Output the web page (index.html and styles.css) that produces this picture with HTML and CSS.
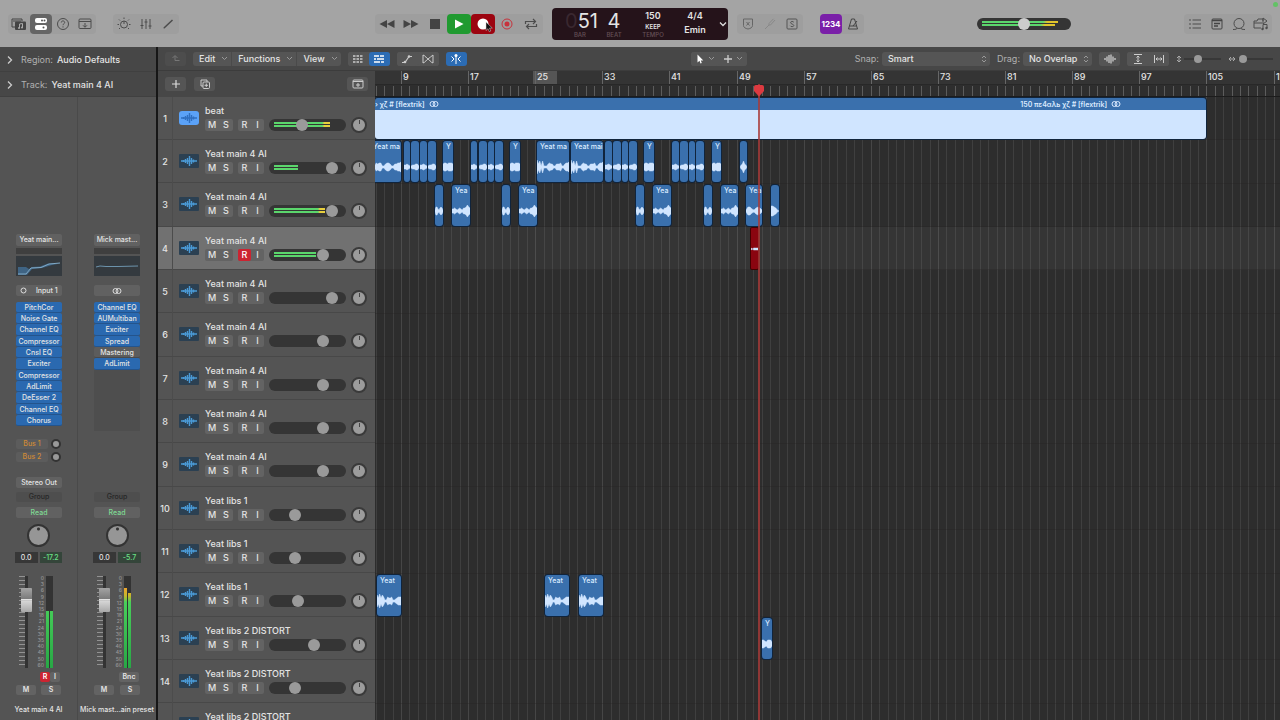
FILE: index.html
```
<!DOCTYPE html>
<html lang="en">
<head>
<meta charset="UTF-8" />
<meta name="viewport" content="width=device-width, initial-scale=1" />
<title>Tracks</title>
<link rel="stylesheet" href="styles.css">
</head>
<body>

<div class="app">
  <header class="control-bar">
    <div class="bar-left">
      <div class="bar-group">
        <button class="bar-btn" aria-label="Library"><svg width="16" height="14" viewBox="0 0 16 14"><path d="M4 10H1V2h10v2" fill="none" stroke="#444"/><rect x="4" y="4.500" width="11" height="8.500" rx="1" fill="#444"/><path d="M2 4h8" stroke="#444"/><path d="M8.500 11V7l3-.5v4" fill="none" stroke="#aaa"/><circle cx="8" cy="11" r="1" fill="#aaa"/><circle cx="11" cy="10.500" r="1" fill="#aaa"/></svg></button>
        <button class="bar-btn bar-btn-on" aria-label="Inspector"><svg width="14" height="12" viewBox="0 0 14 12"><rect x="1" y="0" width="12" height="5" rx="2" fill="#fff"/><rect x="1" y="7" width="12" height="5" rx="2" fill="#fff"/><circle cx="8" cy="2.500" r="1" fill="#555"/><circle cx="10.500" cy="2.500" r="1" fill="#555"/><circle cx="9.500" cy="9.500" r="1" fill="#555"/></svg></button>
        <button class="bar-btn" aria-label="Quick help"><svg width="14" height="14" viewBox="0 0 14 14"><circle cx="7" cy="7" r="5.500" fill="none" stroke="#4c4c4c"/><path d="M5.300 5.500c0-2.200 3.400-2 3.400 0 0 1.300-1.700 1.200-1.700 2.700M7 9.300v1.200" fill="none" stroke="#4c4c4c"/></svg></button>
        <button class="bar-btn" aria-label="Toolbar"><svg width="14" height="12" viewBox="0 0 14 12"><rect x="1" y="1" width="12" height="9.500" rx="1" fill="none" stroke="#4c4c4c"/><path d="M1 3.500h12M7 5v4M5 7.300l2 2 2-2" fill="none" stroke="#4c4c4c"/></svg></button>
      </div>
      <div class="bar-group">
        <button class="bar-btn" aria-label="Smart controls"><svg width="14" height="14" viewBox="0 0 14 14"><circle cx="7" cy="7.500" r="3.500" fill="none" stroke="#4c4c4c"/><path d="M7 4v3M7 .5v1.500M2 2.500l1 1M12 2.500l-1 1M.5 7.500h1.500M12 7.500h1.500M2 12l1-1M12 12l-1-1" stroke="#4c4c4c"/></svg></button>
        <button class="bar-btn" aria-label="Mixer"><svg width="12" height="12" viewBox="0 0 12 12"><path d="M2 1v10M6 1v10M10 1v10M.5 7.500h3M4.500 4h3M8.500 8h3" fill="none" stroke="#4c4c4c"/></svg></button>
        <button class="bar-btn" aria-label="Editors"><svg width="12" height="12" viewBox="0 0 12 12"><path d="M2 10L10.500 2" stroke="#4c4c4c" stroke-width="1.500"/><path d="M1.500 10.500l1.500-.5-1-1z" fill="#4c4c4c"/></svg></button>
      </div>
      <div class="bar-group transport">
        <button class="transport-btn" aria-label="Rewind"><svg width="16" height="10" viewBox="0 0 16 10"><path d="M8 1v8L.5 5zM15.500 1v8L8 5z" fill="#444"/></svg></button>
        <button class="transport-btn" aria-label="Forward"><svg width="16" height="10" viewBox="0 0 16 10"><path d="M.5 1v8L8 5zM8 1v8l7.500-4z" fill="#444"/></svg></button>
        <button class="transport-btn" aria-label="Stop"><svg width="10" height="10" viewBox="0 0 10 10"><rect width="10" height="10" fill="#444"/></svg></button>
        <button class="transport-btn play" aria-label="Play"><svg width="10" height="10" viewBox="0 0 10 10"><path d="M1 .5v9L9.500 5z" fill="#fff"/></svg></button>
        <button class="transport-btn record" aria-label="Record"><svg width="12" height="12" viewBox="0 0 12 12"><circle cx="6" cy="6" r="5.500" fill="#fff"/></svg>
          <svg class="pointer" width="8" height="12" viewBox="0 0 8 12"><path d="M1 1v8.500l2-1.800 1.300 3 1.500-.7L4.500 7.200 7.300 7z" fill="#111" stroke="#ddd" stroke-width=".5"/></svg>
        </button>
        <button class="transport-btn" aria-label="Capture recording"><svg width="12" height="12" viewBox="0 0 12 12"><circle cx="6" cy="6" r="5" fill="none" stroke="#c8323c"/><circle cx="6" cy="6" r="2.500" fill="#c8323c"/></svg></button>
        <button class="transport-btn" aria-label="Cycle"><svg width="14" height="12" viewBox="0 0 14 12"><path d="M1.500 6V3.500H11M9 1l2.500 2.500L9 6M12.500 6v2.500H3M5 6L2.500 8.500 5 11" fill="none" stroke="#4c4c4c" stroke-width="1.200"/></svg></button>
      </div>
    </div>

    <div class="lcd">
      <div class="lcd-cell lcd-bar"><b class="lcd-big"><i class="lcd-ghost">0</i>51</b><span class="lcd-unit">BAR</span></div>
      <div class="lcd-cell lcd-beat"><b class="lcd-big">4</b><span class="lcd-unit">BEAT</span></div>
      <div class="lcd-cell lcd-tempo"><span class="lcd-value">150</span><span class="lcd-keep">KEEP</span><span class="lcd-unit">TEMPO</span></div>
      <div class="lcd-cell lcd-key"><span class="lcd-value">4/4</span><span class="lcd-value">Emin</span></div>
      <svg class="lcd-chevron" width="8" height="6" viewBox="0 0 8 6"><path d="M1 1.500l3 3 3-3" fill="none" stroke="#ddd" stroke-width="1.300"/></svg>
    </div>

    <div class="bar-right">
      <div class="bar-group">
        <button class="bar-btn" aria-label="Replace"><svg width="12" height="12" viewBox="0 0 12 12"><path d="M1.500 1h9v6.500c0 2-2 3-4.500 3.500-2.500-.5-4.500-1.500-4.500-3.500zM4.500 4l3 3.500M7.500 4l-3 3.500" fill="none" stroke="#666"/></svg></button>
        <button class="bar-btn" aria-label="Tuner"><svg width="12" height="12" viewBox="0 0 12 12"><path d="M1 11l4-4M5 5.500V7h1.500L11 2M9.500.8L5 5.500" fill="none" stroke="#888"/></svg></button>
        <button class="bar-btn" aria-label="Solo"><svg width="12" height="12" viewBox="0 0 12 12"><rect x="1" y="1" width="10" height="10" rx="1" fill="none" stroke="#555"/><path d="M7.800 4.300C7.300 3 4.500 3.300 4.500 4.700S7.800 6 7.800 7.500 4.600 9 4.200 7.700" fill="none" stroke="#555"/></svg></button>
      </div>
      <div class="bar-group">
        <button class="bar-btn count-in">1234</button>
        <button class="bar-btn" aria-label="Metronome"><svg width="12" height="12" viewBox="0 0 12 12"><path d="M4.500 1h3l3 10h-9zM2.500 8h7M6 8l4-5" fill="none" stroke="#444"/></svg></button>
      </div>
      <div class="slider master-volume">
        <div class="meter"><i class="meter-bar" style="width:91%"></i><i class="meter-bar" style="width:87%"></i></div>
        <input type="range" value="50" aria-label="Master volume" />
      </div>
      <div class="bar-group">
        <button class="bar-btn" aria-label="List editors"><svg width="12" height="10" viewBox="0 0 12 10"><path d="M0 1h2M3.500 1H12M0 5h2M3.500 5H12M0 9h2M3.500 9H12" stroke="#4c4c4c"/></svg></button>
        <button class="bar-btn" aria-label="Note pad"><svg width="12" height="12" viewBox="0 0 12 12"><rect x="1" y="1" width="10" height="10" rx="1" fill="none" stroke="#444"/><path d="M1 2.500h10M3 5.500h6M3 8h4" stroke="#444" stroke-width="1.300"/></svg></button>
        <button class="bar-btn" aria-label="Loop browser"><svg width="14" height="14" viewBox="0 0 14 14"><circle cx="7" cy="6.500" r="5" fill="none" stroke="#4c4c4c"/><path d="M1 12.500c3 0 4-.5 4-1.500M13 12.500c-3 0-4-.5-4-1.500" fill="none" stroke="#4c4c4c"/></svg></button>
        <button class="bar-btn" aria-label="Browsers"><svg width="16" height="14" viewBox="0 0 16 14"><path d="M8 11H1V4h3l1-2 5 0v2M1 6h8M10 1l4 3-4 3zM10 12V7.500l4 0V11" fill="none" stroke="#4c4c4c"/><circle cx="9.500" cy="12" r="1.200" fill="#4c4c4c"/><circle cx="13.500" cy="11" r="1.200" fill="#4c4c4c"/></svg></button>
      </div>
    </div>
    <i class="status-dot"></i>
  </header>

  <div class="workspace">
    <aside class="inspector">
      <button class="inspector-head"><svg width="6" height="8" viewBox="0 0 6 8"><path d="M1 .5L4.500 4 1 7.500" fill="none" stroke="#ccc" stroke-width="1.300"/></svg><span class="muted">Region:</span>Audio Defaults</button>
      <button class="inspector-head"><svg width="6" height="8" viewBox="0 0 6 8"><path d="M1 .5L4.500 4 1 7.500" fill="none" stroke="#ccc" stroke-width="1.300"/></svg><span class="muted">Track:</span>Yeat main 4 AI</button>

      <div class="strips">
        <section class="strip">
          <button class="cell setting">Yeat main...</button>
          <div class="gain-slot"></div>
          <div class="eq"><svg width="46" height="20" viewBox="0 0 46 20"><path d="M2 11h8l3 2 3-2 8-.5 8-3h12v0L36 9l-10 3-10 1-5 6H2z" fill="#3f6484"/><path d="M2 18h8l5-6 10-.5 8-3.500 11-1" fill="none" stroke="#80a8c4"/></svg></div>
          <button class="cell input"><svg width="7" height="7" viewBox="0 0 7 7"><circle cx="3.500" cy="3.500" r="2.500" fill="none" stroke="#ddd"/></svg>Input 1</button>
          <div class="plugins">
            <button class="plugin">PitchCor</button>
            <button class="plugin">Noise Gate</button>
            <button class="plugin">Channel EQ</button>
            <button class="plugin">Compressor</button>
            <button class="plugin">Cnsl EQ</button>
            <button class="plugin">Exciter</button>
            <button class="plugin">Compressor</button>
            <button class="plugin">AdLimit</button>
            <button class="plugin">DeEsser 2</button>
            <button class="plugin">Channel EQ</button>
            <button class="plugin">Chorus</button>
          </div>
          <div class="sends">
            <div class="send"><button class="bus">Bus 1</button><i class="send-knob"></i></div>
            <div class="send"><button class="bus">Bus 2</button><i class="send-knob"></i></div>
          </div>
          <div class="output"><button class="cell">Stereo Out</button></div>
          <button class="cell group">Group</button>
          <button class="cell read">Read</button>
          <button class="pan" aria-label="Pan"></button>
          <div class="levels"><span class="level">0.0</span><span class="level peak">-17.2</span></div>
          <div class="fader">
            <div class="fader-track"><input type="range" value="82" aria-label="Volume" /></div>
            <div class="fader-scale"></div>
            <div class="vmeter"><i class="vmeter-bar" style="height:62%"></i><i class="vmeter-bar" style="height:62%"></i></div>
          </div>
          <div class="strip-ri"><button class="mini armed">R</button><button class="mini">I</button></div>
          <div class="strip-ms"><button class="mini">M</button><button class="mini">S</button></div>
          <div class="strip-name">Yeat main 4 AI</div>
        </section>

        <section class="strip">
          <button class="cell setting">Mick mast...</button>
          <div class="gain-slot"></div>
          <div class="eq"><svg width="46" height="20" viewBox="0 0 46 20"><path d="M2 11l4-1 6 .5 12 0 20-.5" fill="none" stroke="#6c93ac"/></svg></div>
          <button class="cell" aria-label="Stereo input"><svg width="10" height="6" viewBox="0 0 10 6"><circle cx="3.500" cy="3" r="2.500" fill="none" stroke="#ddd"/><circle cx="6.500" cy="3" r="2.500" fill="none" stroke="#ddd"/></svg></button>
          <div class="plugins plugins-open">
            <button class="plugin">Channel EQ</button>
            <button class="plugin">AUMultiban</button>
            <button class="plugin">Exciter</button>
            <button class="plugin">Spread</button>
            <button class="plugin plugin-off">Mastering</button>
            <button class="plugin">AdLimit</button>
            <div class="plugin-space"></div>
          </div>
          <div class="sends"></div>
          <div class="output"></div>
          <button class="cell group">Group</button>
          <button class="cell read">Read</button>
          <button class="pan" aria-label="Pan"></button>
          <div class="levels"><span class="level">0.0</span><span class="level peak">-5.7</span></div>
          <div class="fader">
            <div class="fader-track"><input type="range" value="82" aria-label="Volume" /></div>
            <div class="fader-scale"></div>
            <div class="vmeter"><i class="vmeter-bar" style="height:87%"></i><i class="vmeter-bar" style="height:82%"></i></div>
          </div>
          <div class="strip-ri"><button class="mini bounce">Bnc</button></div>
          <div class="strip-ms"><button class="mini">M</button><button class="mini">S</button></div>
          <div class="strip-name">Mick mast...ain preset</div>
        </section>
      </div>
    </aside>

    <main class="arrange">
      <div class="toolbar">
        <div class="tools tools-left">
          <button class="tool tool-dim" aria-label="Catch"><svg width="10" height="10" viewBox="0 0 10 10"><path d="M1.500 4L4 1.500 6.500 4M4 2v4.500h4.500" fill="none" stroke="#777"/></svg></button>
          <div class="menu-group">
            <button class="menu">Edit<svg width="7" height="5" viewBox="0 0 7 5"><path d="M1 1l2.500 2.500L6 1" fill="none" stroke="#999"/></svg></button>
            <button class="menu">Functions<svg width="7" height="5" viewBox="0 0 7 5"><path d="M1 1l2.500 2.500L6 1" fill="none" stroke="#999"/></svg></button>
            <button class="menu">View<svg width="7" height="5" viewBox="0 0 7 5"><path d="M1 1l2.500 2.500L6 1" fill="none" stroke="#999"/></svg></button>
          </div>
          <div class="tool-group">
            <button class="tool" aria-label="Grid"><svg width="10" height="8" viewBox="0 0 10 8"><path d="M0 1h10M0 4h10M0 7h10" stroke="#ccc" stroke-width="1.500" stroke-dasharray="2.500 1"/></svg></button>
            <button class="tool tool-on" aria-label="Tracks"><svg width="12" height="8" viewBox="0 0 12 8"><path d="M1 1h5M7 1h4M1 4h2M4 4h7M1 7h6M8 7h3" stroke="#fff" stroke-width="1.500"/></svg></button>
          </div>
          <div class="tool-group">
            <button class="tool" aria-label="Automation"><svg width="12" height="10" viewBox="0 0 12 10"><path d="M1 8.500h3l4-6h3" fill="none" stroke="#ccc" stroke-width="1.200"/><circle cx="4" cy="8" r="1.300" fill="#ccc"/><circle cx="8" cy="2.500" r="1.300" fill="#ccc"/></svg></button>
            <button class="tool" aria-label="Flex"><svg width="12" height="10" viewBox="0 0 12 10"><path d="M1 1v8c3-1 3-3 5-4s3-3 5-4v8C8 8 8 6 6 5S4 2 1 1z" fill="none" stroke="#ccc"/></svg></button>
          </div>
          <button class="tool tool-on" aria-label="Catch playhead"><svg width="12" height="10" viewBox="0 0 12 10"><path d="M6 2v8M1.500 2.500L4 5 1.500 7.500M10.500 2.500L8 5l2.500 2.500" fill="none" stroke="#fff"/><circle cx="6" cy="1.500" r="1.500" fill="#fff"/></svg></button>
        </div>

        <div class="tool-group tools-center">
          <button class="tool tool-wide" aria-label="Pointer tool"><svg width="8" height="10" viewBox="0 0 8 10"><path d="M1.500.5v8l2-1.700 1 2.700 1.300-.5-1-2.500h2.500z" fill="#fff"/></svg><svg width="7" height="5" viewBox="0 0 7 5"><path d="M1 1l2.500 2.500L6 1" fill="none" stroke="#999"/></svg></button>
          <button class="tool tool-wide" aria-label="Marquee tool"><svg width="8" height="8" viewBox="0 0 8 8"><path d="M4 0v8M0 4h8" stroke="#ccc" stroke-width="1.300"/></svg><svg width="7" height="5" viewBox="0 0 7 5"><path d="M1 1l2.500 2.500L6 1" fill="none" stroke="#999"/></svg></button>
        </div>

        <div class="tools tools-right">
          <label class="muted" for="snap">Snap:</label>
          <div class="select snap-select"><select id="snap"><option>Smart</option></select><svg width="6" height="8" viewBox="0 0 6 8"><path d="M1 3l2-2 2 2M1 5l2 2 2-2" fill="none" stroke="#999"/></svg></div>
          <label class="muted" for="drag">Drag:</label>
          <div class="select drag-select"><select id="drag"><option>No Overlap</option></select><svg width="6" height="8" viewBox="0 0 6 8"><path d="M1 3l2-2 2 2M1 5l2 2 2-2" fill="none" stroke="#999"/></svg></div>
          <button class="tool" aria-label="Waveform zoom"><svg width="12" height="10" viewBox="0 0 12 10"><path d="M1 4v2M3 2.500v5M5 1v8M7 .5v9M9 2.500v5M11 4v2" stroke="#bbb" stroke-width="1.500"/></svg></button>
          <div class="tool-group">
            <button class="tool" aria-label="Fit vertical"><svg width="8" height="10" viewBox="0 0 8 10"><path d="M0 .5h8M0 9.500h8M4 2v6M2.500 3.500L4 2l1.500 1.500M2.500 6.500L4 8l1.500-1.500" fill="none" stroke="#ccc"/></svg></button>
            <button class="tool" aria-label="Fit horizontal"><svg width="10" height="8" viewBox="0 0 10 8"><path d="M.5 0v8M9.500 0v8M2 4h6M3.500 2.500L2 4l1.500 1.500M6.500 2.500L8 4 6.500 5.500" fill="none" stroke="#ccc"/></svg></button>
          </div>
          <div class="zoomer"><svg width="6" height="8" viewBox="0 0 6 8"><path d="M1 3l2-2 2 2M1 5l2 2 2-2M3 1v6" fill="none" stroke="#aaa"/></svg><input type="range" value="36" aria-label="Vertical zoom" /></div>
          <div class="zoomer"><svg width="8" height="6" viewBox="0 0 8 6"><path d="M3 1L1 3l2 2M5 1l2 2-2 2M1 3h6" fill="none" stroke="#aaa"/></svg><input type="range" value="3" aria-label="Horizontal zoom" /></div>
        </div>
      </div>

      <div class="editor">
        <div class="track-column">
          <div class="track-tools">
            <button class="tool" aria-label="Add track"><svg width="8" height="8" viewBox="0 0 8 8"><path d="M4 0v8M0 4h8" stroke="#ddd" stroke-width="1.200"/></svg></button>
            <button class="tool" aria-label="Duplicate track"><svg width="10" height="10" viewBox="0 0 10 10"><path d="M3 7H1V1h6v2" fill="none" stroke="#ccc"/><rect x="3" y="3" width="6.500" height="6.500" rx="1" fill="none" stroke="#ccc"/><path d="M6.300 4.500v3.500M4.500 6.300H8" stroke="#ccc"/></svg></button>
            <button class="tool tool-last" aria-label="Track header settings"><svg width="12" height="10" viewBox="0 0 12 10"><rect x="1" y="1" width="10" height="8" rx="1" fill="none" stroke="#ccc"/><path d="M1 2.500h10" stroke="#ccc"/><path d="M6 4v4M4 6h4" stroke="#ccc"/></svg></button>
          </div>
          <div id="track-list"></div>
        </div>

        <div class="timeline">
          <div class="ruler" id="ruler"><i class="cycle-area"></i></div>
          <div class="lanes" id="lanes"><div class="grid" id="grid"></div></div>
          <div class="playhead"><svg width="12" height="13" viewBox="0 0 12 13"><path d="M1 3q0-2 2-2h6q2 0 2 2v4L6 12.500 1 7z" fill="#dc3a40"/></svg></div>
        </div>
      </div>
    </main>
  </div>
</div>

<script src="script.js"></script>
</body>
</html>
```

FILE: styles.css
```
* {
  box-sizing: border-box;
}
body {
  margin: 0;
  background: #2d2d2d;
  color: #e4e4e4;
  font-family: Inter, "Noto Sans", sans-serif;
  font-size: 9px;
  font-weight: 500;
  line-height: 12px;
}
button {
  display: flex;
  align-items: center;
  justify-content: center;
  margin: 0;
  padding: 0;
  border: none;
  background: none;
  color: inherit;
  font: inherit;
  white-space: nowrap;
}
svg {
  display: block;
  flex-shrink: 0;
}
.muted {
  color: #b0b0b0;
}
.app {
  display: flex;
  flex-direction: column;
  height: 100vh;
  overflow: hidden;
}

/* control bar */
.control-bar {
  position: relative;
  display: grid;
  grid-template-columns: 1fr auto 1fr;
  gap: 9px;
  align-items: center;
  height: 47px;
  padding: 0 8px;
  background: #a4a4a4;
  flex-shrink: 0;
}
.bar-left,
.bar-right {
  display: flex;
  align-items: center;
  gap: 17px;
}
.bar-group {
  display: flex;
  align-items: center;
  height: 20px;
  border-radius: 4px;
  background: #9e9e9e;
}
.bar-btn {
  width: 22px;
  height: 20px;
  border-radius: 4px;
}
.bar-btn-on {
  background: #656565;
}
.transport {
  margin-left: auto;
}
.transport-btn {
  position: relative;
  width: 24px;
  height: 20px;
  border-radius: 4px;
}
.play {
  background: #209a30;
}
.record {
  background: #9c0410;
}
.pointer {
  position: absolute;
  left: 14px;
  top: 7px;
}
.count-in {
  background: #7a1fa8;
  color: #fff;
  font-size: 8px;
  font-weight: 700;
}
.status-dot {
  position: absolute;
  top: 2px;
  right: 2px;
  width: 5px;
  height: 5px;
  border-radius: 50%;
  background: #62c265;
}
.lcd {
  position: relative;
  display: flex;
  width: 176px;
  height: 32px;
  padding: 2px 14px 0 10px;
  border-radius: 4px;
  background: #25131a;
}
.lcd-cell {
  display: flex;
  flex-direction: column;
  align-items: center;
}
.lcd-bar {
  width: 36px;
  align-items: flex-end;
}
.lcd-beat {
  width: 32px;
}
.lcd-tempo {
  width: 46px;
}
.lcd-key {
  width: 38px;
  gap: 2px;
}
.lcd-big {
  font-size: 20px;
  font-weight: 400;
  line-height: 22px;
}
.lcd-ghost {
  color: #3a2830;
  font-style: normal;
}
.lcd-unit {
  color: #644f56;
  font-size: 6px;
  line-height: 6px;
}
.lcd-bar .lcd-unit {
  padding-right: 12px;
}
.lcd-value {
  font-weight: 600;
}
.lcd-keep {
  font-size: 6px;
  font-weight: 600;
  line-height: 10px;
}
.lcd-chevron {
  position: absolute;
  right: 1px;
  top: 13px;
}

/* horizontal sliders */
.slider {
  position: relative;
  width: 77px;
  height: 12px;
  border-radius: 6px;
  background: #353535;
}
.slider input {
  position: absolute;
  inset: 0;
}
input[type="range"] {
  appearance: none;
  width: 100%;
  height: 12px;
  margin: 0;
  background: none;
}
input[type="range"]::-webkit-slider-thumb {
  appearance: none;
  width: 12px;
  height: 12px;
  border-radius: 50%;
  background: #9a9a9a;
}
.meter {
  position: absolute;
  inset: 3px 5px;
  display: flex;
  flex-direction: column;
  gap: 1px;
}
.meter-bar {
  height: 2px;
  background: #5bd66c;
}
.meter-hot .meter-bar {
  background: linear-gradient(90deg, #5bd66c 86%, #e8cf3c 90%);
}
.master-volume {
  width: 94px;
  margin: 0 auto;
}
.master-volume .meter-bar {
  background: linear-gradient(90deg, #5bd66c 80%, #e0c42c 86%);
}
.master-volume input::-webkit-slider-thumb {
  background: #ccc;
}

/* inspector */
.workspace {
  display: flex;
  flex: 1;
  min-height: 0;
}
.inspector {
  width: 158px;
  border-right: 2px solid #161616;
  background: #545454;
  flex-shrink: 0;
}
.inspector-head {
  width: 100%;
  height: 25px;
  padding: 1px 0 0 7px;
  justify-content: flex-start;
  gap: 4px;
  background: #474747;
  border-bottom: 1px solid #404040;
}
.inspector-head .muted {
  padding-left: 4px;
  font-weight: 400;
}
.strips {
  display: flex;
}
.strip {
  display: flex;
  flex-direction: column;
  width: 78px;
  height: 623px;
  padding: 137px 16px 0;
  border-right: 1px solid #4a4a4a;
  font-size: 7px;
  line-height: 10px;
}
.strip + .strip {
  border-right: none;
}
.cell {
  width: 46px;
  height: 11px;
  border-radius: 2px;
  background: #616161;
  flex-shrink: 0;
}
.setting {
  height: 12px;
}
.gain-slot {
  width: 46px;
  height: 6px;
  margin: 2px 0;
  background: #3f3f3f;
}
.eq {
  width: 46px;
  height: 20px;
  margin-bottom: 9px;
  background: #343a3f;
}
.input {
  justify-content: space-around;
}
.plugins {
  display: flex;
  flex-direction: column;
  height: 137px;
  padding-top: 6px;
  width: 46px;
}
.plugin {
  height: 11px;
  border-bottom: 1px solid #24548c;
  border-radius: 2px;
  background: #2a69b0;
  line-height: 9px;
  flex-shrink: 0;
}
.plugin:nth-child(3n) {
  height: 12px;
}
.plugin-off {
  background: #5c5c5c;
  border-color: #4a4a4a;
}
.plugins-open {
  padding-bottom: 2px;
}
.plugin-space {
  flex: 1;
  background: #4e4e4e;
}
.sends {
  display: flex;
  flex-direction: column;
  gap: 3px;
  height: 44px;
  padding-top: 6px;
}
.send {
  display: flex;
  justify-content: space-between;
  align-items: center;
}
.bus {
  width: 32px;
  height: 10px;
  border-radius: 2px;
  background: #5c5c5c;
  color: #cf8a35;
}
.send-knob {
  width: 10px;
  height: 10px;
  border: 2px solid #333;
  border-radius: 50%;
  background: #999;
}
.output {
  height: 15px;
  flex-shrink: 0;
}
.group {
  height: 10px;
  margin-bottom: 5px;
  background: #4e4e4e;
  color: #262626;
}
.read {
  color: #7fd893;
}
.pan {
  width: 23px;
  height: 23px;
  margin: 6px auto 5px;
  border: 2px solid #333;
  border-radius: 50%;
  background: radial-gradient(circle at 50% 3px, #333 1px, transparent 2px) #969696;
  flex-shrink: 0;
}
.levels {
  display: flex;
  gap: 2px;
  margin: 0 -1px 13px;
}
.level {
  width: 23px;
  height: 11px;
  background: #373737;
  line-height: 11px;
  text-align: center;
}
.peak {
  background: #34453a;
  color: #69e086;
}
.fader {
  display: flex;
  height: 92px;
  margin-bottom: 4px;
  flex-shrink: 0;
}
.fader-track {
  width: 17px;
  padding-left: 5px;
  background:
    linear-gradient(#333, #333) 9px 0 / 3px 100% no-repeat,
    repeating-linear-gradient(#929292 0 1px, transparent 1px 4px) 3px 0 / 6px 100% no-repeat;
}
.fader-track input[type="range"] {
  display: block;
  width: 11px;
  height: 92px;
  writing-mode: vertical-lr;
  direction: rtl;
}
.fader-track input::-webkit-slider-thumb {
  width: 11px;
  height: 24px;
  border-radius: 1px;
  background: linear-gradient(#a4a4a4, #7c7c7c 44%, #eee 46%, #bbb 54%, #d4d4d4 56%, #a8a8a8);
}
.fader-scale {
  display: flex;
  flex-direction: column;
  justify-content: space-between;
  align-items: flex-end;
  width: 11px;
  margin-right: 2px;
  color: #979797;
  font-size: 5px;
  line-height: 5px;
}
.vmeter {
  display: flex;
  align-items: flex-end;
  gap: 1px;
  width: 7px;
  background: #333;
}
.vmeter-bar {
  flex: 1;
  background: linear-gradient(0deg, #28a745 0, #49cf5a 66px, #c5b72c 72px, #efa52c 80px);
}
.mini {
  width: 20px;
  height: 10px;
  border-radius: 2px;
  background: #636363;
  font-weight: 600;
}
.strip-ri {
  display: flex;
  justify-content: flex-end;
  height: 10px;
  margin: 0 1px 3px 0;
}
.strip-ri .mini {
  width: 10px;
}
.strip-ri .bounce {
  width: 20px;
}
.strip-ms {
  display: flex;
  justify-content: space-between;
  height: 10px;
  margin-bottom: 10px;
}
.armed.armed {
  background: #cc2431;
  color: #fff;
}
.strip-name {
  margin: 0 -16px;
  text-align: center;
  white-space: nowrap;
}

/* tracks toolbar */
.arrange {
  display: flex;
  flex-direction: column;
  flex: 1;
  min-width: 0;
  background: #474747;
}
.toolbar {
  display: grid;
  grid-template-columns: 1fr auto 1fr;
  align-items: center;
  height: 24px;
  padding: 0 7px;
  border-bottom: 1px solid #3c3c3c;
}
.tools {
  display: flex;
  align-items: center;
  gap: 7px;
}
.tools-right {
  justify-content: flex-end;
}
.tool-group,
.menu-group {
  display: flex;
  border-radius: 3px;
  background: #555;
}
.tool {
  width: 21px;
  height: 14px;
  border-radius: 3px;
  background: #555;
}
.tool-dim {
  background: #4d4d4d;
}
.tool-on {
  background: #2c6cb4;
}
.tool-wide {
  width: 28px;
  gap: 4px;
}
.menu {
  height: 14px;
  padding: 0 3px 0 6px;
  gap: 6px;
}
.menu + .menu {
  border-left: 1px solid #4a4a4a;
}
.select {
  position: relative;
}
.select select {
  appearance: none;
  width: 100%;
  height: 14px;
  padding: 0 6px;
  border: none;
  border-radius: 3px;
  background: #555;
  color: #e4e4e4;
  font: inherit;
}
.select svg {
  position: absolute;
  right: 3px;
  top: 3px;
}
.tools-right label {
  margin-right: -4px;
  font-weight: 400;
}
.snap-select {
  width: 108px;
}
.drag-select {
  width: 69px;
}
.zoomer {
  display: flex;
  align-items: center;
  gap: 2px;
  width: 45px;
}
.zoomer input {
  flex: 1;
  min-width: 0;
  background: linear-gradient(#383838, #383838) 0 50% / 100% 2px no-repeat;
}
.zoomer input::-webkit-slider-thumb {
  width: 8px;
  height: 8px;
}

/* track headers */
.editor {
  display: flex;
  flex: 1;
  min-height: 0;
}
.track-column {
  width: 217px;
  background: #545454;
  flex-shrink: 0;
  overflow: hidden;
}
.track-tools {
  display: flex;
  align-items: center;
  gap: 8px;
  height: 26px;
  padding: 0 7px;
  background: #474747;
}
.tool-last {
  margin-left: auto;
}
.track,
.lane {
  height: 43px;
  border-bottom: 1px solid #484848;
}
.track:nth-child(3n),
.lane:nth-child(3n) {
  height: 44px;
}
.track {
  display: grid;
  grid-template-columns: 15px 32px 1fr;
  align-items: center;
}
.track-selected {
  background: #717171;
}
.track-number {
  align-self: stretch;
  border-right: 1px solid #4c4c4c;
  line-height: 43px;
  text-align: center;
}
.track-icon {
  display: flex;
  justify-content: center;
  align-items: center;
  width: 20px;
  height: 14px;
  margin: 0 0 1px 6px;
  border-radius: 1px;
  background: #2b4052;
}
.track-icon-beat {
  border-radius: 3px;
  background: #5ba2f7;
}
.track-name {
  padding-top: 1px;
  white-space: nowrap;
}
.track-controls {
  display: flex;
  align-items: center;
  height: 16px;
}
.track-buttons {
  display: flex;
  margin-right: 5px;
  border-radius: 2px;
  background: #636363;
}
.track-buttons button {
  width: 14px;
  height: 12px;
  border-radius: 2px;
}
.track-buttons + .track-buttons button {
  width: 13px;
}
.track-controls .slider {
  margin-right: 5px;
}
.knob {
  width: 16px;
  height: 16px;
  border: 2px solid #3a3a3a;
  border-radius: 50%;
  background: linear-gradient(#444, #444) 50% 1px / 1px 4px no-repeat, #9c9c9c;
}

/* timeline */
.timeline {
  position: relative;
  flex: 1;
  min-width: 0;
  overflow: hidden;
  background: #2d2d2d;
}
.ruler {
  position: relative;
  height: 26px;
  border-bottom: 1px solid #1c1c1c;
  background: linear-gradient(#343434 13px, #222 13px, #2e2e2e 14px);
  overflow: hidden;
}
.ruler-label {
  position: absolute;
  top: 0;
  height: 13px;
  padding-left: 1px;
  border-left: 1px solid #666;
}
.ruler-tick {
  position: absolute;
  bottom: 0;
  width: 1px;
  height: 10px;
  background: #5c5c5c;
}
.cycle-area {
  position: absolute;
  left: 158px;
  top: 0;
  width: 24px;
  height: 13px;
  background: #555;
}
.lanes {
  position: relative;
}
.grid {
  position: absolute;
  inset: 0;
}
.grid-line {
  position: absolute;
  top: 0;
  bottom: 0;
  width: 1px;
  background: #3f3f3f;
}
.grid-line-strong {
  background: #464646;
}
.lane {
  position: relative;
  border-color: #2420204d;
}
.lane-selected {
  background: #ffffff0a;
}
.region {
  position: absolute;
  top: 1px;
  height: 41px;
  border-radius: 3px;
  background: #3a70ad;
  box-shadow: 0 0 0 1px #10243c;
  color: #dcebff;
  font-size: 7px;
  line-height: 11px;
  white-space: nowrap;
  overflow: hidden;
}
.region-name {
  padding-left: 3px;
}
.region svg {
  position: absolute;
  left: 0;
  top: 16px;
}
.region-recording {
  border-radius: 1px;
  background: #8a0510;
  box-shadow: 0 0 0 1px #400;
}
.region-recording svg {
  top: 11px;
}
.region-beat {
  display: flex;
  justify-content: space-between;
  padding: 0 85px 0 0;
  background: linear-gradient(#3a70ad 12px, #d0e5ff 12px);
}
.region-title {
  display: flex;
  align-items: center;
  gap: 4px;
  height: 12px;
  font-weight: 600;
}
.region-title svg {
  position: static;
}
.playhead {
  position: absolute;
  top: 13px;
  bottom: 0;
  left: 378px;
  width: 12px;
  background: linear-gradient(#a83a38cc, #a83a38cc) 50% 0 / 2px 100% no-repeat;
}
```

FILE: script.js
```
const BAR = 8.39;
const BAR_NINE = 26;

const tracks = [
  { name: 'beat', volume: 42, meter: 83, hot: true, beat: true },
  { name: 'Yeat main 4 AI', volume: 87, meter: 36 },
  { name: 'Yeat main 4 AI', volume: 87, meter: 76, hot: true },
  { name: 'Yeat main 4 AI', volume: 74, meter: 62, selected: true },
  { name: 'Yeat main 4 AI', volume: 87 },
  { name: 'Yeat main 4 AI', volume: 74 },
  { name: 'Yeat main 4 AI', volume: 74 },
  { name: 'Yeat main 4 AI', volume: 74 },
  { name: 'Yeat main 4 AI', volume: 74 },
  { name: 'Yeat libs 1', volume: 30 },
  { name: 'Yeat libs 1', volume: 30 },
  { name: 'Yeat libs 1', volume: 36 },
  { name: 'Yeat libs 2 DISTORT', volume: 60 },
  { name: 'Yeat libs 2 DISTORT', volume: 30 },
  { name: 'Yeat libs 2 DISTORT', volume: 30 },
];

// [start, width, name, wave]
const regions = {
  2: [
    [-5, 31, 'Yeat ma', 'words'], [29, 6, '', 'tail'], [36, 8, '', 'hit'], [45, 7, '', 'tail'], [53, 8, '', 'hit'],
    [68, 10, 'Y', 'block'], [96, 6, '', 'tail'], [104, 8, '', 'hit'], [113, 6, '', 'tail'], [120, 8, '', 'hit'],
    [135, 10, 'Y', 'block'], [162, 32, 'Yeat ma', 'phrase'], [196, 32, 'Yeat mai', 'phrase'],
    [230, 7, '', 'tail'], [238, 8, '', 'hit'], [247, 6, '', 'tail'], [254, 8, '', 'hit'],
    [269, 10, 'Y', 'block'], [297, 7, '', 'tail'], [305, 8, '', 'hit'], [314, 6, '', 'tail'], [321, 8, '', 'hit'],
    [337, 9, 'Y', 'block'], [365, 7, '', 'spike'],
  ],
  3: [
    [60, 8, '', 'pair'], [77, 18, 'Yea', 'yea'], [127, 8, '', 'pair'], [144, 18, 'Yea', 'yea'],
    [261, 8, '', 'pair'], [278, 18, 'Yea', 'yea'], [329, 8, '', 'pair'], [346, 17, 'Yea', 'yea'],
    [371, 16, 'Yea', 'pair'], [396, 8, '', 'fall'],
  ],
  4: [[376, 7, '', 'thin']],
  12: [[2, 24, 'Yeat', 'lib'], [170, 24, 'Yeat', 'lib'], [204, 24, 'Yeat', 'lib']],
  13: [[387, 10, 'Y', 'bow']],
};

// half heights, spread over the width of the region
const waves = {
  words: [3, 3, 1, 1, 4, 3, 4, 4, 1, 1, 3, 4, 4, 3, 1, 1, 3, 3, 4, 4, 5],
  phrase: [7, 3, 6, 1, 6, 1, 1, 1, 3, 4, 3, 3, 1, 1, 3, 3, 3, 4, 1, 1, 3, 4, 4, 5],
  tail: [2, 2, 3, 2, 1],
  hit: [1, 2, 2, 3, 3, 1],
  block: [3, 4, 4, 3, 4, 4, 4, 3],
  spike: [0, 2, 3, 6, 3, 2, 0],
  pair: [1, 4, 4, 2, 1, 3, 4, 3, 1],
  yea: [2, 2, 3, 2, 1, 2, 3, 2, 1, 3, 3, 4, 6, 4, 3],
  fall: [5, 5, 4, 3, 1, 0],
  thin: [1, 0, 1, 1, 1, 1],
  lib: [6, 3, 7, 3, 6, 4, 1, 1, 4, 3, 3, 4, 1, 1, 2, 3, 4, 4, 4],
  bow: [4, 4, 3, 2, 4, 4, 4, 2],
};

function wave(kind, width) {
  const amps = waves[kind];
  const step = width / (amps.length - 1);
  const top = amps.map((a, i) => `${i * step},${10 - a}`);
  const bottom = amps.map((a, i) => `${i * step},${10 + a}`).reverse();
  return `<svg width="${width}" height="20" viewBox="0 0 ${width} 20"><polygon points="${top.concat(bottom).join(' ')}" fill="#d0e5ff" stroke="#d0e5ff" stroke-width=".5"/></svg>`;
}

function trackIcon(track) {
  const color = track.beat ? '#2f6fc0' : '#4a9ad6';
  return `<span class="track-icon ${track.beat ? 'track-icon-beat' : ''}"><svg width="16" height="10" viewBox="0 0 16 10"><path d="M0 5h16M2.500 4v2M4.500 3v4M6.500 2v6M8.500 0v10M10.500 2v6M12.500 3.500v3" stroke="${color}" stroke-width="1.400"/></svg></span>`;
}

function trackRow(track, i) {
  const meter = track.meter
    ? `<div class="meter ${track.hot ? 'meter-hot' : ''}"><i class="meter-bar" style="width:${track.meter}%"></i><i class="meter-bar" style="width:${track.meter}%"></i></div>`
    : '';
  return `<div class="track ${track.selected ? 'track-selected' : ''}">
    <span class="track-number">${i + 1}</span>
    ${trackIcon(track)}
    <div>
      <div class="track-name">${track.name}</div>
      <div class="track-controls">
        <div class="track-buttons"><button>M</button><button>S</button></div>
        <div class="track-buttons"><button class="${track.selected ? 'armed' : ''}">R</button><button>I</button></div>
        <div class="slider">${meter}<input type="range" value="${track.volume}" aria-label="Track ${i + 1} volume"></div>
        <button class="knob" aria-label="Track ${i + 1} pan"></button>
      </div>
    </div>
  </div>`;
}

const stereo = '<svg width="10" height="6" viewBox="0 0 10 6"><circle cx="3.500" cy="3" r="2.500" fill="none" stroke="#dcebff"/><circle cx="6.500" cy="3" r="2.500" fill="none" stroke="#dcebff"/></svg>';

function lane(track, i) {
  let html = (regions[i + 1] || []).map(([start, width, name, kind]) =>
    `<div class="region ${track.selected ? 'region-recording' : ''}" style="left:${start}px;width:${width}px"><div class="region-name">${name}</div>${wave(kind, width)}</div>`
  ).join('');
  if (track.beat) {
    const width = Math.round(BAR_NINE + (105 - 9) * BAR);
    html = `<div class="region region-beat" style="left:0;width:${width}px"><span class="region-title">› χζ # [flextrik]${stereo}</span><span class="region-title">150 πε4αλь χζ # [flextrik]${stereo}</span></div>`;
  }
  return `<div class="lane ${track.selected ? 'lane-selected' : ''}">${html}</div>`;
}

document.getElementById('track-list').innerHTML = tracks.map(trackRow).join('');
document.getElementById('lanes').insertAdjacentHTML('beforeend', tracks.map(lane).join(''));

let ruler = '';
let grid = '';
for (let bar = 6; bar < 200; bar++) {
  const x = Math.round(BAR_NINE + (bar - 9) * BAR);
  const major = bar % 8 === 1;
  ruler += `<i class="ruler-tick" style="left:${x}px"></i>`;
  if (major) ruler += `<span class="ruler-label" style="left:${x}px">${bar}</span>`;
  grid += `<i class="grid-line ${major ? 'grid-line-strong' : ''}" style="left:${x}px"></i>`;
}
document.getElementById('ruler').insertAdjacentHTML('beforeend', ruler);
document.getElementById('grid').innerHTML = grid;

const marks = [0, 3, 6, 9, 12, 15, 18, 21, 24, 30, 35, 40, 45, 50, 60];
document.querySelectorAll('.fader-scale').forEach(scale => {
  scale.innerHTML = marks.map(m => `<span>${m}</span>`).join('');
});
```
